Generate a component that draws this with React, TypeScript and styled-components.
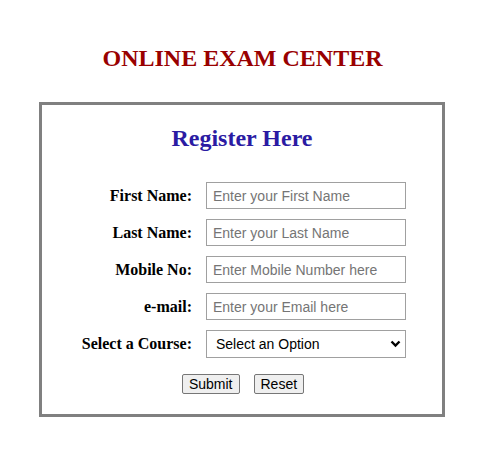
import React from 'react'
import styled, { createGlobalStyle } from 'styled-components'

const GlobalStyle = createGlobalStyle`
    body {
        margin: 0;
        background: #ffffff;
        font-family: "Liberation Serif", "Times New Roman", serif;
    }
`

const Page = styled.div`
    width: 485px;
    padding-top: 44px;
`

const Title = styled.h1`
    margin: 0;
    font-size: 24px;
    line-height: 28px;
    font-weight: bold;
    text-align: center;
    color: #990000;
`

const Card = styled.form`
    box-sizing: border-box;
    width: 406px;
    margin: 30px 0 0 39px;
    border: 3px solid #808080;
    padding: 19px 0 20px;
`

const Heading = styled.h2`
    margin: 0 0 30px;
    font-size: 24px;
    line-height: 28px;
    font-weight: bold;
    text-align: center;
    color: #2b1ba3;
`

const Fields = styled.div`
    display: grid;
    grid-template-columns: 150px 200px;
    column-gap: 14px;
    row-gap: 10px;
    align-items: center;
`

const Label = styled.label`
    text-align: right;
    font-size: 16px;
    font-weight: bold;
    color: #000;
`

const Input = styled.input`
    box-sizing: border-box;
    width: 200px;
    height: 27px;
    margin: 0;
    padding: 0 6px;
    border: 1px solid #a0a0a0;
    font-family: "Liberation Sans", Arial, sans-serif;
    font-size: 14px;
    color: #000;
    outline: none;
    &::placeholder {
        color: #757575;
    }
`

const SelectWrap = styled.div`
    position: relative;
    width: 200px;
    height: 28px;
`

const Select = styled.select`
    box-sizing: border-box;
    width: 200px;
    height: 28px;
    margin: 0;
    padding: 0 24px 0 9px;
    border: 1px solid #a0a0a0;
    border-radius: 0;
    background: #fff;
    appearance: none;
    font-family: "Liberation Sans", Arial, sans-serif;
    font-size: 14px;
    color: #000;
    outline: none;
`

const Chevron = styled.svg`
    position: absolute;
    right: 5px;
    top: 10px;
    pointer-events: none;
`

const Actions = styled.div`
    display: flex;
    justify-content: center;
    gap: 14px;
    margin-top: 16px;
    padding-left: 2px;
`

const Button = styled.button`
    box-sizing: border-box;
    height: 20px;
    margin: 0;
    padding: 0 6px;
    border: 1px solid #767676;
    border-radius: 2px;
    background: #efefef;
    font-family: "Liberation Sans", Arial, sans-serif;
    font-size: 14px;
    line-height: 16px;
    color: #000;
`

const fields = [
    { id: 'fname', label: 'First Name:', placeholder: 'Enter your First Name' },
    { id: 'lname', label: 'Last Name:', placeholder: 'Enter your Last Name' },
    { id: 'mobile', label: 'Mobile No:', placeholder: 'Enter Mobile Number here' },
    { id: 'email', label: 'e-mail:', placeholder: 'Enter your Email here' },
]

const App: React.FC = () => {
    return (
        <Page>
            <GlobalStyle />
            <Title>ONLINE EXAM CENTER</Title>
            <Card onSubmit={e => e.preventDefault()}>
                <Heading>Register Here</Heading>
                <Fields>
                    {fields.map(f => (
                        <React.Fragment key={f.id}>
                            <Label htmlFor={f.id}>{f.label}</Label>
                            <Input id={f.id} placeholder={f.placeholder} />
                        </React.Fragment>
                    ))}
                    <Label htmlFor="course">Select a Course:</Label>
                    <SelectWrap>
                        <Select id="course" defaultValue="">
                            <option value="">Select an Option</option>
                            <option value="java">Java</option>
                            <option value="python">Python</option>
                            <option value="web">Web Development</option>
                        </Select>
                        <Chevron width="11" height="8" viewBox="0 0 11 8">
                            <path d="M1.5 1.5 L5.5 5.5 L9.5 1.5" fill="none" stroke="#000" strokeWidth="2.4" />
                        </Chevron>
                    </SelectWrap>
                </Fields>
                <Actions>
                    <Button type="submit">Submit</Button>
                    <Button type="reset">Reset</Button>
                </Actions>
            </Card>
        </Page>
    )
}

export default App
